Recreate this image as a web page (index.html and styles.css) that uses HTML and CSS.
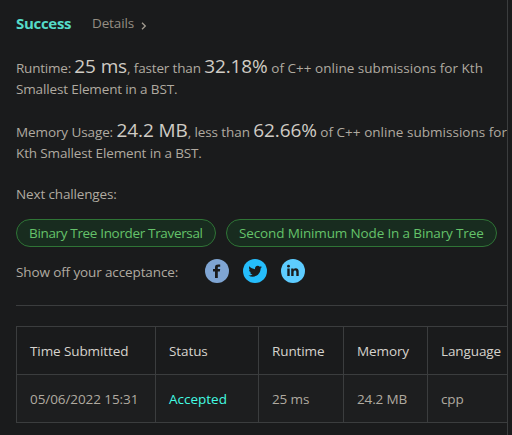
FILE: index.html
```html
<!DOCTYPE html>
<html lang="en">
<head>
<meta charset="utf-8">
<title>Submission result</title>
<link rel="stylesheet" href="styles.css">
</head>
<body>
<main class="panel">
  <header class="result">
    <span class="success">Success</span>
    <a class="details">Details</a>
    <svg class="chevron" width="6" height="8" viewBox="0 0 6 8"><path d="M1 .8 4.3 4 1 7.2"/></svg>
  </header>
  <p class="stat"><span class="lead-a">Runtime: </span><b class="big">25 ms</b><span class="mid-a">, faster than </span><b class="big">32.18%</b><span class="tail-a"> of C++ online submissions for Kth</span><br>Smallest Element in a BST.</p>
  <p class="stat"><span class="lead-b">Memory Usage: </span><b class="big">24.2 MB</b><span class="mid-b">, less than </span><b class="big">62.66%</b><span class="tail-b"> of C++ online submissions for</span><br>Kth Smallest Element in a BST.</p>
  <p class="next">Next challenges:</p>
  <div class="pills">
    <a class="pill pill-a">Binary Tree Inorder Traversal</a>
    <a class="pill pill-b">Second Minimum Node In a Binary Tree</a>
  </div>
  <div class="share">
    <span class="share-label">Show off your acceptance:</span>
    <svg class="social" viewBox="0 0 24 24"><circle cx="12" cy="12" r="12" fill="#7fa5d3"/><path fill="#1a1b1c" d="M10 19v-6.500H8V10h2V8.300C10 6.200 11.300 5.500 13.200 5.500H15.200v2.300h-1.300c-.9 0-1.100.4-1.100 1V10h2.400l-.4 2.500h-2V19z"/></svg>
    <svg class="social" viewBox="0 0 24 24"><circle cx="12" cy="12" r="12" fill="#25bdfb"/><path fill="#1a1b1c" transform="translate(5.500 5.500) scale(.56)" d="M23.950 4.570a10 10 0 0 1-2.820.770 4.960 4.960 0 0 0 2.160-2.720c-.950.550-2 .950-3.130 1.180a4.920 4.920 0 0 0-8.380 4.480C7.690 8.090 4.070 6.130 1.640 3.160a4.820 4.820 0 0 0-.670 2.480c0 1.710.870 3.210 2.190 4.100a4.900 4.900 0 0 1-2.230-.620v.060a4.920 4.920 0 0 0 3.950 4.830 5 5 0 0 1-2.210.080 4.940 4.940 0 0 0 4.600 3.420A9.870 9.870 0 0 1 0 19.540a13.990 13.990 0 0 0 7.550 2.210c9.050 0 14-7.500 14-13.980 0-.210 0-.420-.020-.630a9.940 9.940 0 0 0 2.420-2.570z"/></svg>
    <svg class="social" viewBox="0 0 24 24"><circle cx="12" cy="12" r="12" fill="#5dccff"/><path fill="#1a1b1c" d="M6.300 9.500h2.400V17H6.300zM10.200 9.500h2.300v1c.5-.8 1.300-1.200 2.300-1.200 2 0 2.900 1.200 2.900 3.400V17h-2.400v-3.900c0-1.100-.4-1.700-1.200-1.700-.9 0-1.500.6-1.500 1.800V17h-2.400z"/><circle cx="7.500" cy="7.200" r="1.400" fill="#1a1b1c"/></svg>
  </div>
  <table class="history">
    <colgroup><col class="c1"><col class="c2"><col class="c3"><col class="c4"><col class="c5"></colgroup>
    <tr><th>Time Submitted</th><th>Status</th><th>Runtime</th><th>Memory</th><th>Language</th></tr>
    <tr class="row"><td class="date">05/06/2022 15:31</td><td class="accepted">Accepted</td><td>25 ms</td><td>24.2 MB</td><td>cpp</td></tr>
  </table>
</main>
</body>
</html>
```
FILE: styles.css
```css
* { box-sizing: border-box; }
body {
  margin: 0;
  background: #1a1b1c;
  color: #b0aaa0;
  font: 13.500px/21px "Open Sans", "Noto Sans", sans-serif;
  letter-spacing: -0.14px;
  overflow: hidden;
}
.panel {
  width: 508px;
  height: 435px;
  padding: 12px 0 0 16px;
  border-right: 1px solid #3b3d3e;
  overflow: hidden;
  white-space: nowrap;
}
.result { display: flex; align-items: center; height: 22px; margin-bottom: 24px; }
.success { color: #55dcc9; font-size: 15px; font-weight: 700; width: 76px; letter-spacing: -0.3px; }
.details { color: #958e83; width: 49px; }
.chevron { fill: none; stroke: #a39c91; stroke-width: 1.300; margin-top: 5px; }
.stat { margin: 0 0 22px; height: 42px; white-space: pre; }
.big { font-size: 19px; font-weight: 400; line-height: 0; color: #d0ccc5; letter-spacing: -0.1px; }
.lead-a { letter-spacing: -0.22px; }
.mid-a { letter-spacing: -0.16px; }
.tail-a { letter-spacing: 0.03px; }
.lead-b { letter-spacing: -0.1px; }
.mid-b { letter-spacing: -0.1px; }
.tail-b { letter-spacing: 0.03px; }
.next { margin: -2px 0 14px; }
.pills { display: flex; gap: 10px; height: 28px; }
.pill {
  height: 28px;
  padding: 0 12px;
  border: 1px solid #2f7436;
  border-radius: 14px;
  background: #182c1f;
  color: #65c26a;
  line-height: 26px;
}
.pill-a { width: 200px; letter-spacing: -0.34px; }
.pill-b { width: 271px; }
.share {
  box-sizing: content-box;
  display: flex;
  gap: 14px;
  height: 24px;
  margin-top: 12px;
  padding-bottom: 22px;
  border-bottom: 1px solid #3b3d3e;
}
.share-label { width: 175px; line-height: 26px; letter-spacing: -0.12px; }
.social { width: 24px; height: 24px; }
.history {
  width: 496px;
  margin-top: 20px;
  table-layout: fixed;
  border-collapse: collapse;
}
.c1 { width: 139px; }
.c2 { width: 103px; }
.c3 { width: 85px; }
.c4 { width: 84px; }
.c5 { width: 85px; }
th, td {
  height: 48px;
  padding: 1px 13px 0;
  border: 1px solid #3b3d3e;
  text-align: left;
  font-weight: 400;
}
th { color: #d6d3cd; letter-spacing: -0.1px; }
.row { background: #1d1e1f; }
.date { letter-spacing: -0.08px; }
.accepted { color: #43fbe2; letter-spacing: 0; }
```
